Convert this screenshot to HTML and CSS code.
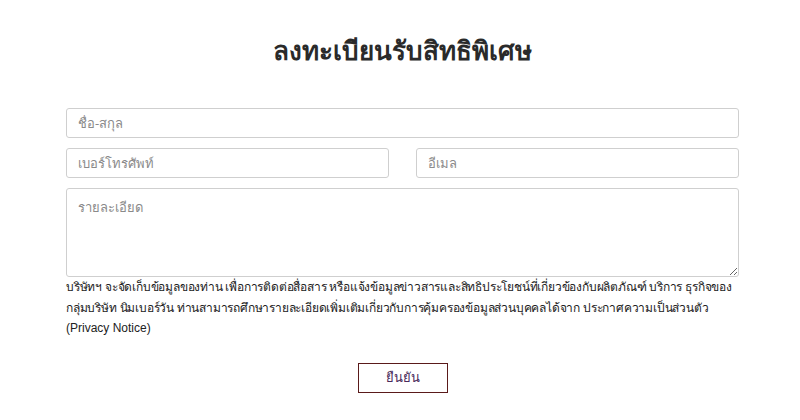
FILE: index.html
```html
<!DOCTYPE html>
<html lang="th">
<head>
<meta charset="utf-8">
<link rel="stylesheet" href="styles.css">
</head>
<body>
<div class="page">
  <h1 class="title">ลงทะเบียนรับสิทธิพิเศษ</h1>
  <form class="form">
    <input class="field" type="text" placeholder="ชื่อ-สกุล">
    <div class="row">
      <input class="field" type="text" placeholder="เบอร์โทรศัพท์">
      <input class="field" type="text" placeholder="อีเมล">
    </div>
    <textarea class="field area" placeholder="รายละเอียด"></textarea>
    <p class="notice">บริษัทฯ จะจัดเก็บข้อมูลของท่าน เพื่อการติดต่อสื่อสาร หรือแจ้งข้อมูลข่าวสารและสิทธิประโยชน์ที่เกี่ยวข้องกับผลิตภัณฑ์ บริการ ธุรกิจของ <span class="nw">กลุ่มบริษัท</span> นิมเบอร์วัน ท่านสามารถศึกษารายละเอียดเพิ่มเติมเกี่ยวกับการคุ้มครองข้อมูลส่วนบุคคลได้จาก ประกาศความเป็นส่วนตัว <span class="latin">(Privacy Notice)</span></p>
    <div class="actions">
      <button class="submit" type="button">ยืนยัน</button>
    </div>
  </form>
</div>
</body>
</html>
```

FILE: styles.css
```css
* { box-sizing: border-box; }
html, body { margin: 0; padding: 0; background: #fff; }
body { font-family: "Noto Sans", "DejaVu Sans", sans-serif; color: #222; }
.page { width: 800px; padding: 30px 61px 0 66px; }
.title { margin: 0 0 38px; text-align: center; font-size: 26px; font-weight: 700; line-height: 40px; color: #2a2a2a; }
.form { display: flex; flex-direction: column; gap: 10px; }
.row { display: grid; grid-template-columns: 1fr 1fr; column-gap: 27px; }
.field { display: block; width: 100%; height: 30px; border: 1px solid #cfcfcf; border-radius: 3px; padding: 0 11px; font-family: inherit; font-size: 13px; color: #333; background: #fff; outline: none; }
.field::placeholder { color: #8a8a8a; }
.area { height: 89px; padding: 8px 11px; resize: vertical; }
.notice { margin: -10px 0 0; font-size: 12px; letter-spacing: -0.2px; line-height: 20.5px; color: #222; }
.nw { white-space: nowrap; }
.latin { font-family: "Liberation Sans", Arial, sans-serif; letter-spacing: 0; white-space: nowrap; }
.actions { display: flex; justify-content: center; margin-top: 14px; }
.submit { width: 90px; height: 30px; border: 1px solid #5a1a1a; background: #fff; color: #4a2a5a; font-family: inherit; font-size: 13px; border-radius: 0; }
```
